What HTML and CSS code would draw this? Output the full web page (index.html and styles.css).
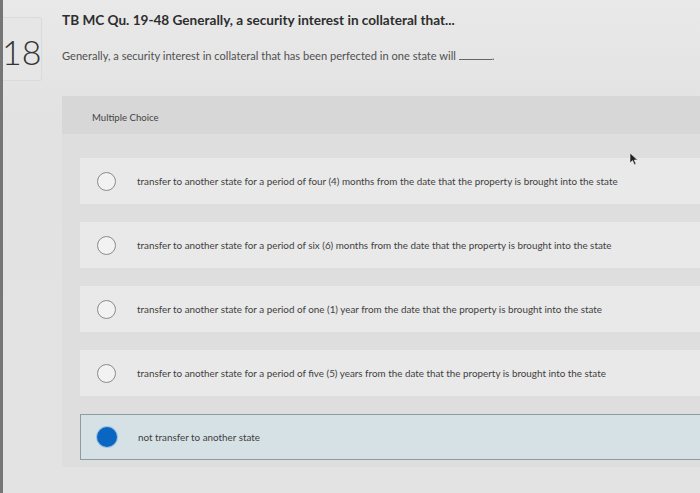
FILE: index.html
```html
<!DOCTYPE html>
<html lang="en">
  <head>
    <meta charset="UTF-8" />
    <meta name="viewport" content="width=device-width, initial-scale=1.0" />
    <title>TB MC Qu. 19-48</title>
    <link rel="stylesheet" href="styles.css">
  </head>
  <body>
    <div class="page">
      <!-- Question number -->
      <aside class="q-number">
        <span>18</span>
      </aside>

      <main class="question">
        <h1 class="q-title">TB MC Qu. 19-48 Generally, a security interest in collateral that...</h1>
        <p class="q-text">Generally, a security interest in collateral that has been perfected in one state will <span class="blank"></span>.</p>

        <!-- Answer panel -->
        <section class="choices">
          <div class="choices-head">Multiple Choice</div>

          <div class="choice-list">
            <label class="choice">
              <span class="radio"></span>
              <span class="choice-text">transfer to another state for a period of four (4) months from the date that the property is brought into the state</span>
            </label>
            <label class="choice">
              <span class="radio"></span>
              <span class="choice-text">transfer to another state for a period of six (6) months from the date that the property is brought into the state</span>
            </label>
            <label class="choice">
              <span class="radio"></span>
              <span class="choice-text">transfer to another state for a period of one (1) year from the date that the property is brought into the state</span>
            </label>
            <label class="choice">
              <span class="radio"></span>
              <span class="choice-text">transfer to another state for a period of five (5) years from the date that the property is brought into the state</span>
            </label>
            <label class="choice selected">
              <span class="radio"></span>
              <span class="choice-text">not transfer to another state</span>
            </label>
          </div>
        </section>
      </main>
    </div>

    <!-- Mouse pointer -->
    <svg class="cursor" width="10" height="14" viewBox="0 0 10 14">
      <path d="M1 1 L1 11 L3.5 8.6 L5.4 12.8 L7 12 L5.2 8 L8.6 8 Z" fill="#222" stroke="#eee" stroke-width="0.6" />
    </svg>
  </body>
</html>
```

FILE: styles.css
```css
/* General Styles */
body {
  margin: 0;
  height: 493px;
  overflow: hidden;
  font-family: Lato, "Open Sans", sans-serif;
  background: linear-gradient(#e9e9e9, #e2e2e2 120px, #e3e3e3);
  border-left: 3px solid #767676;
  color: #4a4a4a;
}

.page {
  display: flex;
  height: 100%;
}

/* Question number */
.q-number {
  width: 38px;
  height: 62px;
  margin-top: 17px;
  flex-shrink: 0;
  background: #e6e6e6;
  border: 1px solid #dadada;
  border-left: none;
  border-radius: 0 3px 3px 0;
}

.q-number span {
  display: block;
  margin: 17px 0 0 -1px;
  font-size: 34px;
  font-weight: 300;
  line-height: 1;
  color: #333;
}

/* Question */
.question {
  flex: 1;
  display: flex;
  flex-direction: column;
  margin-left: 20px;
}

.q-title {
  margin: 12px 0 0;
  font-size: 13.6px;
  font-weight: 700;
  line-height: 17px;
  color: #2e2e2e;
}

.q-text {
  margin: 20px 0 0;
  font-size: 11.1px;
  line-height: 14px;
  color: #505050;
}

.blank {
  display: inline-block;
  width: 33px;
  border-bottom: 1px solid #666;
}

/* Answer panel */
.choices {
  margin-top: 33px;
  height: 371px;
  background: #dedede;
}

.choices-head {
  height: 38px;
  padding-left: 30px;
  font-size: 9.6px;
  line-height: 43px;
  color: #444;
  background: #d7d7d7;
}

.choice-list {
  display: flex;
  flex-direction: column;
  gap: 18px;
  padding: 24px 0 0 18px;
}

.choice {
  display: flex;
  align-items: center;
  gap: 21px;
  height: 46px;
  padding-left: 17px;
  background: #e9e9e9;
  font-size: 9.85px;
  color: #3f3f3f;
}

.radio {
  width: 17px;
  height: 17px;
  flex-shrink: 0;
  border: 1.5px solid #8a8a8a;
  border-radius: 50%;
  background: #f2f2f2;
}

.choice.selected {
  height: 44px;
  background: #d6e1e5;
  border: 1px solid #8d9ca2;
  border-right: none;
  padding-left: 16px;
}

.choice.selected .radio {
  width: 20px;
  height: 20px;
  border: none;
  background: #0b66c2;
  box-shadow: 0 0 0 1px #9cc3e4;
}

.cursor {
  position: absolute;
  left: 629px;
  top: 152px;
}
```
